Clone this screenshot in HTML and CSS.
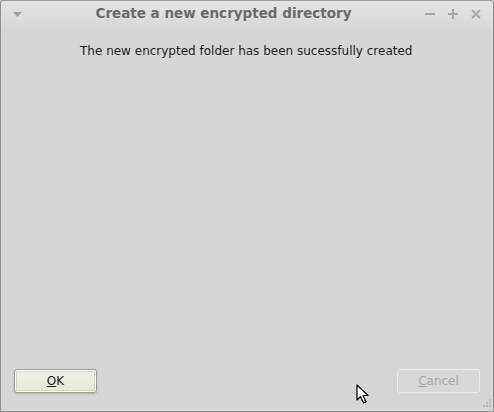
FILE: index.html
```html
<!DOCTYPE html>
<html>
<head>
<meta charset="utf-8">
<link rel="stylesheet" href="styles.css">
</head>
<body>
<div class="window">
  <div class="titlebar">
    <div class="menu-btn"><svg width="9" height="5" viewBox="0 0 9 5"><path d="M0 0h9L4.5 5z" fill="#a0a0a0"/></svg></div>
    <div class="title">Create a new encrypted directory</div>
    <div class="controls">
      <svg width="12" height="12" viewBox="0 0 12 12"><rect x="1" y="5" width="10" height="2" fill="#a8a8a8"/></svg>
      <svg width="12" height="12" viewBox="0 0 12 12"><rect x="1" y="5" width="10" height="2" fill="#a8a8a8"/><rect x="5" y="1" width="2" height="10" fill="#a8a8a8"/></svg>
      <svg width="12" height="12" viewBox="0 0 12 12"><path d="M2 2L10 10M10 2L2 10" stroke="#a8a8a8" stroke-width="2"/></svg>
    </div>
  </div>
  <div class="content">
    <p class="message">The new encrypted folder has been sucessfully created</p>
  </div>
  <div class="buttons">
    <button class="btn ok"><u>O</u>K</button>
    <button class="btn cancel" disabled><u>C</u>ancel</button>
  </div>
  <svg class="cursor" width="14" height="21" viewBox="0 0 14 21"><path d="M1 1L1 16L4.5 12.5L7.5 19L10 18L7 11.5L12 11.5Z" fill="#fff" stroke="#000" stroke-width="1.2" stroke-linejoin="round"/></svg>
  <svg class="grip" width="12" height="12" viewBox="0 0 12 12" fill="#b8b8b8"><rect x="9" y="1" width="2" height="2"/><rect x="6" y="4" width="2" height="2"/><rect x="9" y="4" width="2" height="2"/><rect x="3" y="7" width="2" height="2"/><rect x="6" y="7" width="2" height="2"/><rect x="9" y="7" width="2" height="2"/></svg>
</div>
</body>
</html>
```
FILE: styles.css
```css
html, body {
  margin: 0;
  padding: 0;
  width: 494px;
  height: 412px;
  overflow: hidden;
  background: #d6d6d6;
}
.window {
  position: relative;
  box-sizing: border-box;
  width: 494px;
  height: 412px;
  border: 1px solid #8e8e8e;
  border-top-color: #9a9a9a;
  border-radius: 3px 3px 0 0;
  background: #d6d6d6;
  display: flex;
  flex-direction: column;
  font-family: "DejaVu Sans", sans-serif;
}
.titlebar {
  height: 27px;
  display: flex;
  align-items: center;
  background: linear-gradient(#e4e4e4, #d8d8d8);
  border-radius: 3px 3px 0 0;
  padding: 0 11px 4px 12px;
  box-sizing: border-box;
}
.menu-btn {
  width: 9px;
  display: flex;
  align-items: center;
  margin-top: 3px;
}
.title {
  flex: 1;
  text-align: center;
  font-weight: bold;
  font-size: 13.5px;
  color: #6b6b6b;
  padding-left: 1px;
}
.controls {
  display: flex;
  gap: 11px;
  align-items: center;
  margin-top: 3px;
}
.controls svg { display: block; }
.content {
  flex: 1;
}
.message {
  margin: 16px 0 0 0;
  padding-left: 79px;
  font-size: 12px;
  color: #1e1e1e;
}
.buttons {
  display: flex;
  justify-content: space-between;
  padding: 0 13px 18px 13px;
}
.btn {
  box-sizing: border-box;
  width: 83px;
  height: 24px;
  border: 1px solid #a6a6a6;
  border-radius: 3px;
  font-family: "DejaVu Sans", sans-serif;
  font-size: 12px;
  padding: 0;
}
.ok {
  background: linear-gradient(#eef2e6, #e2e9d7);
  border-color: #9aa08f;
  color: #1a1a1a;
  box-shadow: 0 0 0 1px #ffffff inset, 0 0 0 2px #d0d8c0 inset, 0 1px 2px rgba(0,0,0,0.2);
}
.cancel {
  background: #d8d8d8;
  border-color: #ececec;
  color: #a8a8a8;
  box-shadow: none;
}
.cursor {
  position: absolute;
  left: 355px;
  top: 383px;
}
.grip {
  position: absolute;
  right: 1px;
  bottom: 1px;
}
```
